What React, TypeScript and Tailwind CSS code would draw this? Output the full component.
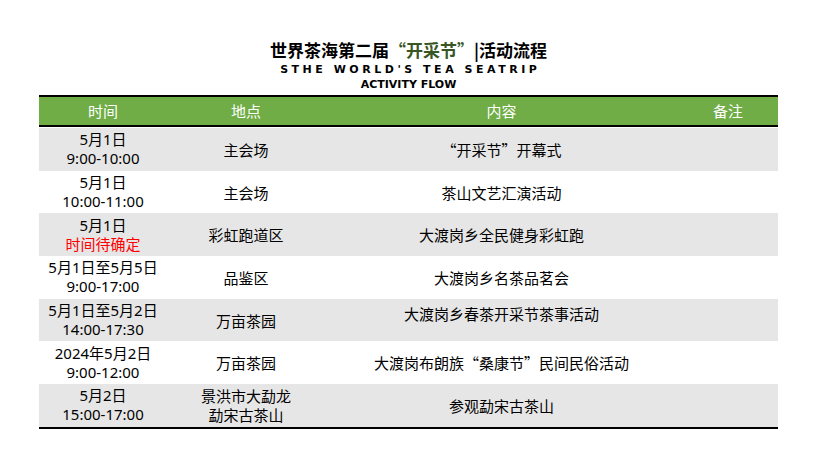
import React from "react";

type Row = {
  time: React.ReactNode;
  place: React.ReactNode;
  content: React.ReactNode;
  contentClass?: string;
};

const rows: Row[] = [
  { time: <>5月1日<br />9:00-10:00</>, place: "主会场", content: "“开采节”开幕式" },
  { time: <>5月1日<br />10:00-11:00</>, place: "主会场", content: "茶山文艺汇演活动" },
  {
    time: <>5月1日<br /><span className="text-[#ff0000]">时间待确定</span></>,
    place: "彩虹跑道区",
    content: "大渡岗乡全民健身彩虹跑",
  },
  { time: <>5月1日至5月5日<br />9:00-17:00</>, place: "品鉴区", content: "大渡岗乡名茶品茗会" },
  {
    time: <>5月1日至5月2日<br />14:00-17:30</>,
    place: "万亩茶园",
    content: "大渡岗乡春茶开采节茶事活动",
    contentClass: "pb-[14px]",
  },
  { time: <>2024年5月2日<br />9:00-12:00</>, place: "万亩茶园", content: "大渡岗布朗族“桑康节”民间民俗活动" },
  { time: <>5月2日<br />15:00-17:00</>, place: <>景洪市大勐龙<br />勐宋古茶山</>, content: "参观勐宋古茶山" },
];

const cols = "grid grid-cols-[128px_158px_353px_100px]";

export default function App() {
  return (
    <div className="w-[817px] h-[457px] bg-white font-['Noto_Sans_CJK_SC',sans-serif] text-black">
      {/* title block */}
      <div className="pt-[38px] flex flex-col items-center">
        <h1 className="text-[17px] leading-[24px] font-bold">
          世界茶海第二届<span className="text-[#375623]">“开采节”</span>|活动流程
        </h1>
        <div className="font-['DejaVu_Sans',sans-serif] font-bold text-[11px] leading-[15px] tracking-[0.32em] pl-[0.32em]">
          STHE WORLD'S TEA SEATRIP
        </div>
        <div className="font-['DejaVu_Sans',sans-serif] font-bold text-[11px] leading-[15px]">
          ACTIVITY FLOW
        </div>
      </div>

      {/* table */}
      <div className="ml-[39px] mt-[3px] w-[739px] border-t-2 border-b-2 border-black">
        <div className={`${cols} h-[30px] bg-[#70ad47] text-white text-[15px] border-b-2 border-black`}>
          <div className="flex items-center justify-center">时间</div>
          <div className="flex items-center justify-center">地点</div>
          <div className="flex items-center justify-center">内容</div>
          <div className="flex items-center justify-center">备注</div>
        </div>
        <div className="pt-[1px]">
          {rows.map((r, i) => (
            <div
              key={i}
              className={`${cols} h-[42.7px] text-[15px] leading-[19px] ${i % 2 === 0 ? "bg-[#e7e6e6]" : "bg-white"}`}
            >
              <div className="flex items-center justify-center text-center font-['Noto_Sans','Noto_Sans_CJK_SC',sans-serif]">
                <div>{r.time}</div>
              </div>
              <div className="flex items-center justify-center text-center">
                <div>{r.place}</div>
              </div>
              <div className={`flex items-center justify-center text-center ${r.contentClass ?? ""}`}>
                {r.content}
              </div>
              <div />
            </div>
          ))}
        </div>
      </div>
    </div>
  );
}
